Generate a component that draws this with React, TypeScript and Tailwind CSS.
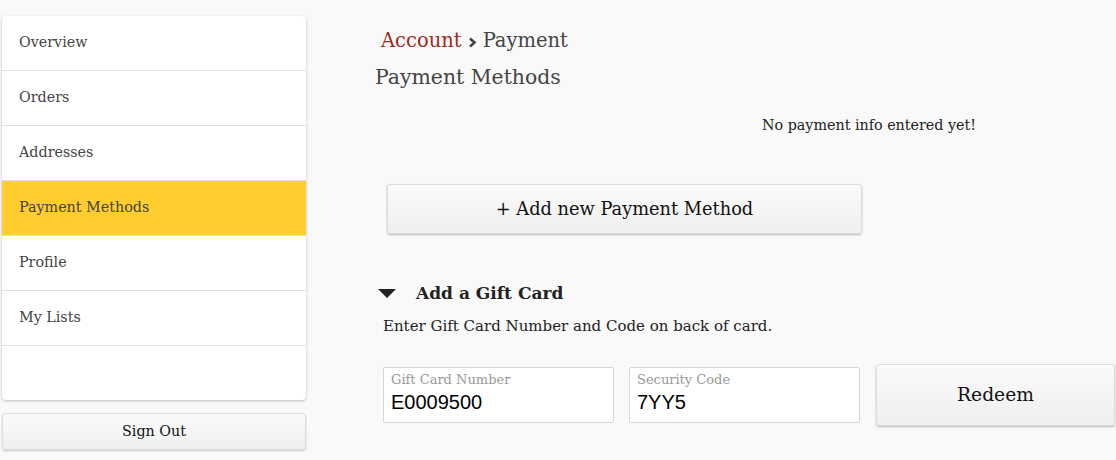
import React from "react";

const navItems = ["Overview", "Orders", "Addresses", "Payment Methods", "Profile", "My Lists"];

const slab = { fontFamily: '"DejaVu Serif", "Liberation Serif", serif' };

export default function App() {
  return (
    <div className="flex h-[460px] w-[1116px] bg-[#f9f9f9] pl-[2px] pt-[16px] text-[#444]" style={slab}>
      <aside className="flex w-[304px] flex-col">
        <nav className="overflow-hidden rounded-[4px] bg-white shadow-[0_1px_3px_rgba(0,0,0,0.25)]">
          {navItems.map((item) => (
            <div
              key={item}
              className={`flex h-[55px] items-center border-b border-[#e0e0e0] pl-[17px] text-[14.3px] ${
                item === "Payment Methods" ? "bg-[#ffcd2e]" : ""
              }`}
            >
              {item}
            </div>
          ))}
          <div className="h-[54px]" />
        </nav>
        <button
          type="button"
          className="mt-[13px] h-[37px] rounded-[3px] border border-[#dcdcdc] bg-gradient-to-b from-[#fafafa] to-[#efefef] text-[14.3px] text-[#111] shadow-[0_1px_2px_rgba(0,0,0,0.2)]"
        >
          Sign Out
        </button>
      </aside>

      <main className="ml-[69px] flex flex-1 flex-col">
        <div className="mt-[12px] flex items-center pl-[6px] text-[19.5px] leading-[26px]">
          <span className="text-[#9b2b1b]">Account</span>
          <svg width="9" height="11" viewBox="0 0 9 11" className="mx-[6px] mt-[2px]">
            <polyline points="2,1.5 6.5,5.5 2,9.5" fill="none" stroke="#444" strokeWidth="2.6" />
          </svg>
          <span>Payment</span>
        </div>
        <h1 className="mt-[10px] text-[20.4px] leading-[26px]">Payment Methods</h1>

        <p className="mt-[25px] pl-[387px] text-[14.3px] text-[#222]">No payment info entered yet!</p>

        <button
          type="button"
          className="ml-[12px] mt-[48px] h-[50px] w-[475px] rounded-[3px] border border-[#dcdcdc] bg-gradient-to-b from-[#fafafa] to-[#efefef] text-[17.8px] text-[#111] shadow-[0_1px_2px_rgba(0,0,0,0.25)]"
        >
          + Add new Payment Method
        </button>

        <div className="ml-[3px] mt-[47px] flex items-center">
          <svg width="18" height="10" viewBox="0 0 18 10" className="mr-[20px]">
            <polygon points="0,0 18,0 9,9" fill="#222" />
          </svg>
          <h2 className="text-[17px] font-bold text-[#222]">Add a Gift Card</h2>
        </div>
        <p className="ml-[8px] mt-[8px] text-[15px] text-[#222]">Enter Gift Card Number and Code on back of card.</p>

        <div className="ml-[8px] mt-[27px] flex items-center">
          <div className="flex h-[56px] w-[231px] flex-col rounded-[2px] border border-[#d6d6d6] bg-white px-[7px] pt-[3px]">
            <span className="text-[13px] leading-[18px] text-[#999]">Gift Card Number</span>
            <span className="text-[20px] leading-[26px] text-black" style={{ fontFamily: '"Liberation Sans", Arial, sans-serif' }}>
              E0009500
            </span>
          </div>
          <div className="ml-[15px] flex h-[56px] w-[231px] flex-col rounded-[2px] border border-[#d6d6d6] bg-white px-[7px] pt-[3px]">
            <span className="text-[13px] leading-[18px] text-[#999]">Security Code</span>
            <span className="text-[20px] leading-[26px] text-black" style={{ fontFamily: '"Liberation Sans", Arial, sans-serif' }}>
              7YY5
            </span>
          </div>
          <button
            type="button"
            className="ml-[16px] h-[62px] w-[239px] rounded-[3px] border border-[#dcdcdc] bg-gradient-to-b from-[#fafafa] to-[#efefef] text-[18.7px] text-[#111] shadow-[0_1px_2px_rgba(0,0,0,0.25)]"
          >
            Redeem
          </button>
        </div>
      </main>
    </div>
  );
}
